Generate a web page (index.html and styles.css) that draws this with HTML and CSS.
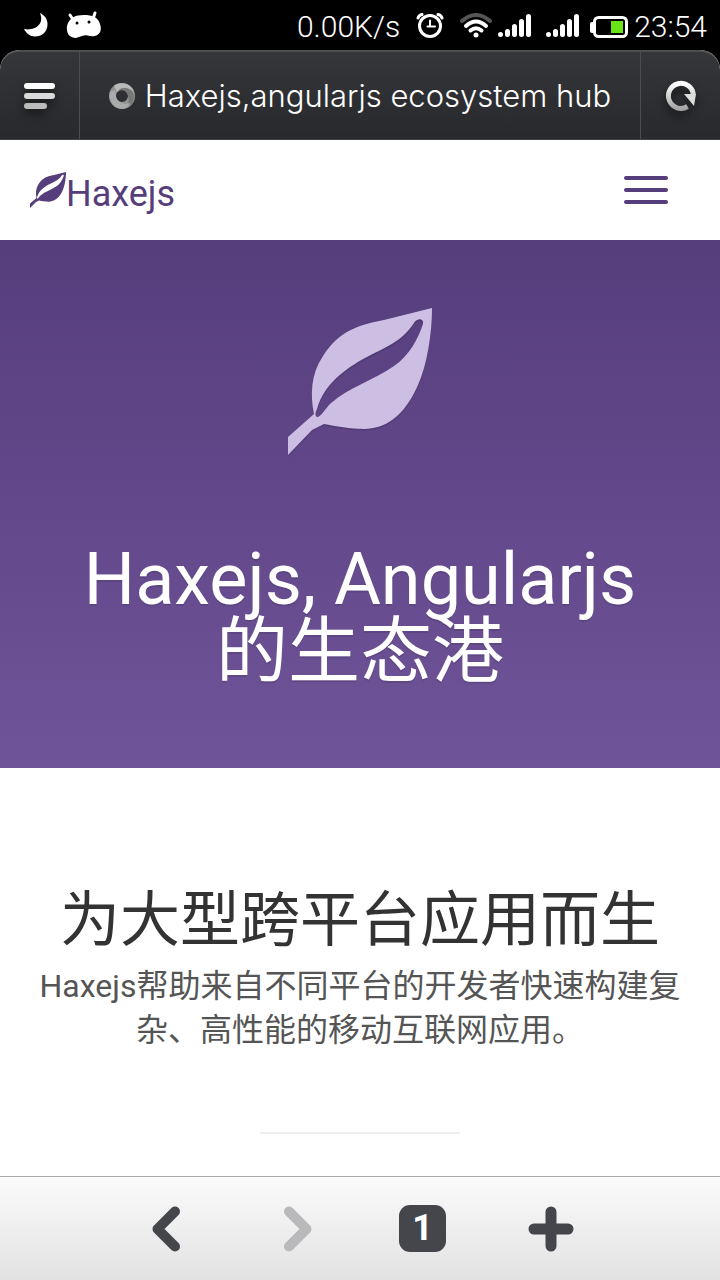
FILE: index.html
```html
<!DOCTYPE html>
<html lang="zh-CN">
<head>
<meta charset="utf-8">
<meta name="viewport" content="width=device-width, initial-scale=1">
<title>Haxejs,angularjs ecosystem hub</title>
<link rel="stylesheet" href="styles.css">
</head>
<body>
<svg class="defs" aria-hidden="true">
  <symbol id="leaf" viewBox="0 0 144 147">
    <path fill-rule="evenodd" d="M144 0C144 26 139 57 130 77C119 102 103 120 77 121C62 121 48 118 36 116L24 122L0 147V129L26 106C22 86 23 66 35 48C51 23 70 17 96 12ZM29 109C33 109 37 101 42 96C61 79 86 72 106 58C121 48 130 31 135 16C136 10 129 10 126 15C113 35 95 40 77 50C57 61 36 76 29 101C27 105 27 108 29 109Z"/>
  </symbol>
  <symbol id="signal" viewBox="0 0 33 23">
    <path d="M2.500 20.500v0M9.500 17.500v3M16.500 12.500v8M23.500 7.500v13M30.500 2.500v18" fill="none" stroke="#fff" stroke-width="5" stroke-linecap="round"/>
  </symbol>
</svg>

<header class="status">
  <div class="status-group notices">
    <svg width="24" height="24" viewBox="0 0 24 24"><path fill="#fff" d="M16 0C20 2 24 6 23.500 12C23 19 18 23.500 11 23.500C6 23.500 2 20 0 16C10 18 21 12 16 0Z"/></svg>
    <svg width="36" height="28" viewBox="0 0 36 28"><path d="M4 4L8 10M29 2L27 8" stroke="#fff" stroke-width="3" stroke-linecap="round"/><path fill="#fff" d="M18 4C26 4 32 6 34 13C37 22 31 26 24 25C19 23 16 25 10 27C4 27 0 23 1 15C3 7 9 4 18 4Z"/><circle cx="11" cy="12" r="1.500" fill="#000"/><circle cx="23" cy="11" r="1.500" fill="#000"/></svg>
  </div>
  <div class="status-group">
    <span>0.00K/s</span>
    <svg class="alarm" width="28" height="25" viewBox="0 0 28 25"><g fill="none" stroke="#fff" stroke-linecap="round"><circle cx="14" cy="13" r="10.500" stroke-width="3"/><path d="M14 7.500V13.500H19M11.500 13.500H14" stroke-width="2"/><path d="M2 5Q3 2 6 1.500M26 5Q25 2 22 1.500" stroke-width="3"/></g></svg>
    <svg class="wifi" width="32" height="25" viewBox="0 0 32 25"><g fill="none" stroke="#fff" stroke-width="4" stroke-linecap="round"><path d="M2 8Q16-4 30 8" stroke="#555"/><path d="M6 13Q16 4 26 13M10.500 17.500Q16 13 21.500 17.500"/></g><circle cx="16" cy="22" r="2.500" fill="#fff"/></svg>
    <svg class="signal" width="33" height="23"><use href="#signal"/></svg>
    <svg class="signal" width="33" height="23"><use href="#signal"/></svg>
    <svg class="battery" width="38" height="22" viewBox="0 0 38 22"><rect x="0" y="6" width="5" height="11" rx="2" fill="#fff"/><rect x="4.500" y="1.500" width="32" height="19" rx="4" fill="none" stroke="#fff" stroke-width="3"/><rect x="21" y="5" width="12" height="12" fill="#69e417"/></svg>
    <time>23:54</time>
  </div>
</header>

<div class="browser-bar">
  <button class="bar-button" aria-label="Menu"><svg width="36" height="36" viewBox="0 0 36 36"><defs><linearGradient id="shine" x1="0" y1="0" x2="0" y2="1"><stop stop-color="#fff"/><stop offset="1" stop-color="#a5a5a5"/></linearGradient></defs><rect x="2" y="5" width="31" height="6" rx="3" fill="#fff"/><rect x="2" y="15" width="31" height="6" rx="3" fill="#d9dada"/><rect x="2" y="25" width="23" height="6" rx="3" fill="#bbb"/></svg></button>
  <div class="page-title">
    <svg width="26" height="26" viewBox="0 0 26 26"><path fill="#929292" fill-rule="evenodd" d="M13 0A13 13 0 1 1 13 26A13 13 0 1 1 13 0ZM13 7A6 6 0 1 0 13 19A6 6 0 1 0 13 7Z"/><path d="M5 2.500C12-2 22 0 25 9C19 3 12 4 8 9Z" fill="#bababa"/><path d="M8 9C12 3 20 4 24 10C27 18 22 22 18 24C21 19 20 11 16 8C13 6 9 7 8 9Z" fill="#777"/><path d="M1 9C-1 17 4 25 13 26C17 26 20 23 21 20C15 23 7 18 7 13L6 7Z" fill="#aaa"/></svg>
    <span>Haxejs,angularjs ecosystem hub</span>
  </div>
  <button class="bar-button reload" aria-label="Reload"><svg width="36" height="36" viewBox="0 0 36 36"><path d="M24.500 28.500A12.500 12.500 0 1 1 30.400 17" fill="none" stroke="url(#shine)" stroke-width="5"/><path d="M21 16H33L31 28Z" fill="#ddd"/></svg></button>
</div>

<nav class="site-nav">
  <a class="brand" href="#"><svg width="36" height="36" viewBox="0 0 144 147" preserveAspectRatio="none"><use href="#leaf" width="144" height="147"/></svg><span>Haxejs</span></a>
  <button class="toggle" aria-label="Toggle navigation"><span></span><span></span><span></span></button>
</nav>

<main>
  <section class="hero">
    <svg class="hero-leaf" width="144" height="147"><use href="#leaf"/></svg>
    <h1>Haxejs, Angularjs<br>的生态港</h1>
  </section>
  <section class="intro">
    <h2>为大型跨平台应用而生</h2>
    <p>Haxejs帮助来自不同平台的开发者快速构建复杂、高性能的移动互联网应用。</p>
    <hr>
  </section>
</main>

<footer class="toolbar">
  <button aria-label="Back"><svg width="48" height="48" viewBox="0 0 48 48"><path d="M33 6.500L15.500 24L33 41.500" class="chevron"/></svg></button>
  <button aria-label="Forward" disabled><svg width="48" height="48" viewBox="0 0 48 48"><path d="M19 6.500L36.500 24L19 41.500" class="chevron"/></svg></button>
  <button aria-label="Tabs"><span class="tab-count">1</span></button>
  <button aria-label="New tab"><svg width="48" height="48" viewBox="0 0 48 48"><path d="M24 7V41M7 24H41" class="plus"/></svg></button>
</footer>
</body>
</html>
```

FILE: styles.css
```css
* { box-sizing: border-box; }
body {
  margin: 0;
  min-height: 100vh;
  display: flex;
  flex-direction: column;
  background: #fff;
  color: #555;
  font-family: Roboto, "Noto Sans CJK SC", sans-serif;
}
button { border: 0; margin: 0; padding: 0; background: none; font: inherit; color: inherit; }
svg { display: block; flex: none; fill: currentColor; }
.defs { position: absolute; width: 0; height: 0; }

.status {
  height: 50px;
  padding: 0 13px 0 24px;
  display: flex;
  justify-content: space-between;
  align-items: center;
  background: #000;
  color: #fff;
  font: 300 30px/50px Roboto, sans-serif;
}
.status-group { display: flex; align-items: center; }
.status span, .status time { padding-top: 3px; }
.notices { gap: 18px; }
.alarm { margin: 0 16px; }
.wifi { margin-right: 6px; }
.signal { margin-right: 15px; }
.battery { margin: 4px 6px 0 -4px; }

.browser-bar {
  height: 90px;
  display: flex;
  border-top: 2px solid #4d4e50;
  border-bottom: 1px solid #44454a;
  border-radius: 20px 20px 0 0;
  background: linear-gradient(#353639, #28292c);
  box-shadow: 0 -20px 0 20px #000;
  clip-path: inset(0);
  color: #fff;
}
.bar-button {
  flex: none;
  width: 80px;
  display: flex;
  align-items: center;
  justify-content: center;
  border-right: 1px solid #4c4d50;
}
.bar-button svg { filter: drop-shadow(0 5px 4px #151517); }
.reload { border-right: 0; border-left: 1px solid #4c4d50; }
.page-title {
  flex: 1;
  min-width: 0;
  display: flex;
  align-items: center;
  justify-content: center;
  gap: 10px;
  white-space: nowrap;
  font: 300 31px/40px Inter, sans-serif;
}

.site-nav {
  height: 100px;
  padding: 0 52px 0 30px;
  display: flex;
  align-items: center;
  justify-content: space-between;
  color: #563d7c;
}
.brand { display: flex; align-items: center; color: inherit; text-decoration: none; font-size: 36px; line-height: 40px; }
.brand span { padding-top: 8px; }
.toggle { width: 44px; display: grid; gap: 8px; }
.toggle span { height: 4px; border-radius: 2px; background: #563d7c; }

.hero {
  padding: 68px 30px 80px;
  display: flex;
  flex-direction: column;
  align-items: center;
  background: linear-gradient(#563d7c, #6f5499);
  color: #cdbfe3;
}
.hero-leaf { filter: drop-shadow(0 2px 0 rgba(0, 0, 0, .1)); }
h1 {
  margin: 89px 0 0;
  color: #fff;
  text-align: center;
  text-shadow: 0 2px 0 rgba(0, 0, 0, .1);
  font-size: 72px;
  font-weight: 400;
  line-height: 72px;
}
main { flex: 1; }
.intro { padding: 120px 30px 42px; text-align: center; }
h2 { margin: 0; color: #333; font-size: 60px; font-weight: 400; line-height: 66px; }
p { margin: 10px 0 0; font-size: 32px; line-height: 44px; }
hr { width: 200px; height: 2px; margin: 80px auto 0; border: 0; background: #eee; }

.toolbar {
  height: 104px;
  padding: 0 105px 0 102px;
  display: grid;
  grid-template-columns: repeat(4, 1fr);
  align-items: center;
  justify-items: center;
  border-top: 1px solid #aaa;
  background: linear-gradient(#fbfbfb, #e2e2e2);
  color: #45464b;
}
.toolbar button:disabled { color: #b9b9bb; }
.chevron, .plus { fill: none; stroke: currentColor; stroke-linecap: round; stroke-linejoin: round; stroke-width: 10px; }
.plus { stroke-width: 11px; }
.tab-count {
  display: block;
  width: 47px;
  height: 47px;
  border-radius: 11px;
  background: #45464b;
  color: #fff;
  font: 700 36px/47px Roboto, sans-serif;
}
```
